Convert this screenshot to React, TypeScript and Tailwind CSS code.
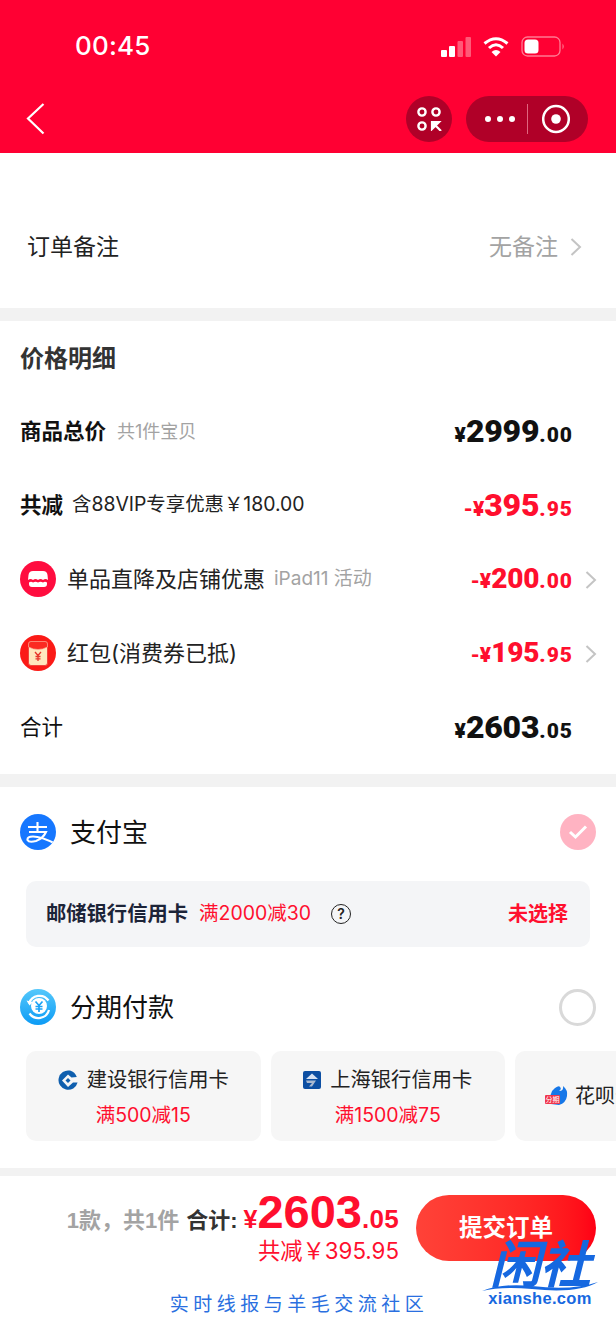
import React from "react";

const CJK = '"Inter","Noto Sans CJK SC",sans-serif';

function Chevron({ className = "" }: { className?: string }) {
  return (
    <svg width="12" height="20" viewBox="0 0 12 20" fill="none" className={className}>
      <path d="M1.500 2 L10 10 L1.500 18" stroke="#c4c4c4" strokeWidth="2" />
    </svg>
  );
}

function Price({ sign, main, dec, color, big = "text-[32px]" }: { sign: string; main: string; dec: string; color: string; big?: string }) {
  return (
    <div className={`flex items-baseline font-black font-['Roboto'] pb-[3px] ${color}`}>
      <span className="text-[21px] leading-none">{sign}</span>
      <span className={`${big} leading-none tracking-[-0.2px]`}>{main}</span>
      <span className="text-[21px] leading-none tracking-[1px]">{dec}</span>
    </div>
  );
}

function Row({ children, right }: { children: React.ReactNode; right: React.ReactNode }) {
  return (
    <div className="h-[74px] flex items-center justify-between pl-[20px] pr-[43px] relative">
      <div className="flex items-center min-w-0 pb-[2px]">{children}</div>
      {right}
    </div>
  );
}

function ShopIcon() {
  return (
    <div className="w-[36px] h-[36px] rounded-full bg-[#ff0d3f] flex items-center justify-center shrink-0 mr-[11px]">
      <svg width="22" height="18" viewBox="0 0 22 18">
        <path d="M6 1 H16 Q20 1 20.500 5 L21 10 Q18.500 8 16 10 Q13.500 8 11 10 Q8.500 8 6 10 Q3.500 8 1 10 L1.500 5 Q2 1 6 1 Z" fill="#fff" />
        <path d="M2 12.500 Q4 11 6 12.500 Q8.500 11 11 12.500 Q13.500 11 16 12.500 Q18 11 20 12.500 V14 Q20 17 17 17 H5 Q2 17 2 14 Z" fill="#fff" />
      </svg>
    </div>
  );
}

function RedPacketIcon() {
  return (
    <div className="w-[36px] h-[36px] rounded-full bg-[#fb1a16] flex items-center justify-center shrink-0 mr-[11px]">
      <svg width="20" height="25" viewBox="0 0 20 25">
        <rect x="0.500" y="0.500" width="19" height="24" rx="2.500" fill="#ffe6bd" stroke="#f0443c" />
        <path d="M0.500 3 Q0.500 .5 3 .5 H17 Q19.500 .5 19.500 3 V6 Q10 11 0.500 6 Z" fill="#fb2a22" stroke="#ffb9a0" strokeWidth="0.600" />
        <path d="M7 11 L10 14.500 L13 11 M10 14.500 V20 M7.500 15.500 H12.500 M7.500 17.800 H12.500" stroke="#e8332a" strokeWidth="1.300" fill="none" />
      </svg>
    </div>
  );
}

function AlipayIcon() {
  return (
    <svg width="36" height="36" viewBox="0 0 36 36" className="shrink-0">
      <defs>
        <clipPath id="ali"><circle cx="18" cy="18" r="18" /></clipPath>
      </defs>
      <circle cx="18" cy="18" r="18" fill="#1677ff" />
      <g clipPath="url(#ali)">
        <path d="M8 13 H27 M17.500 8 V18 M9 18 H26 Q23 24.500 16 27 Q9 29 7.500 26 Q7 22.500 13 22.500 Q21 22.500 36 30" stroke="#fff" strokeWidth="2.100" fill="none" />
      </g>
    </svg>
  );
}

function InstallmentIcon() {
  return (
    <svg width="36" height="36" viewBox="0 0 36 36" className="shrink-0">
      <defs>
        <linearGradient id="inst" x1="0" y1="0" x2="0" y2="1">
          <stop offset="0" stopColor="#55c8fb" />
          <stop offset="1" stopColor="#0c9bf5" />
        </linearGradient>
      </defs>
      <circle cx="18" cy="18" r="18" fill="url(#inst)" />
      <circle cx="19" cy="17" r="8" fill="#fff" />
      <path d="M9 14.500 A11 11 0 0 1 28.500 11.500 M29 21 A11 11 0 0 1 9.500 24.500" stroke="#fff" strokeWidth="2.200" fill="none" />
      <path d="M6.500 11.500 L9.500 16.500 L13 13 Z" fill="#fff" />
      <path d="M15.500 12.500 L19 16.500 L22.500 12.500 M19 16.500 V23 M15.500 17.500 H22.500 M15.500 20 H22.500" stroke="#1aa3f6" strokeWidth="1.700" fill="none" />
    </svg>
  );
}

function CcbIcon() {
  return (
    <svg width="20" height="20" viewBox="0 0 20 20" className="shrink-0">
      <path d="M12 .6 A9.700 9.700 0 1 0 19.600 12.500 L15 12.500 L10 17 L4 10.500 L10 4.500 L13.500 7.500 L18.800 7 Q17 2 12 .6 Z" fill="#0f5fae" />
      <path d="M7.500 10.500 L10 8 L12.500 10.500 L10 13 Z" fill="#0f5fae" />
    </svg>
  );
}

function ShIcon() {
  return (
    <svg width="18" height="18" viewBox="0 0 18 18" className="shrink-0">
      <rect width="18" height="18" rx="2" fill="#0d4fa3" />
      <path d="M9 2.500 L15 8 H3 Z" fill="#d6e2f4" />
      <path d="M3 9.500 H13 L9 15.500 H6 L9 12 H4 Z" fill="#aab9d0" />
    </svg>
  );
}

function HuabeiIcon() {
  return (
    <div className="relative w-[24px] h-[24px] shrink-0 mr-[6px]">
      <svg width="24" height="24" viewBox="0 0 24 24">
        <path d="M10 4 Q14 1 15 3 Q17 5 14 7 Q19 7 18 2 Q23 6 22 12 Q21 19 14 21 L6 20 Q3 14 6 10 Q7 6 10 4 Z" fill="#1677e8" />
      </svg>
      <span className="absolute left-0 top-[11px] w-[15px] h-[9px] bg-[#f0364c] rounded-[1px] text-white text-[7px] leading-[9px] text-center">分期</span>
    </div>
  );
}

function BankCard({ icon, name, promo }: { icon: React.ReactNode; name: string; promo: string }) {
  return (
    <div className="w-[234.500px] h-[90px] shrink-0 rounded-[10px] bg-[#f6f6f6] flex flex-col items-center pt-[15px]">
      <div className="flex items-center gap-[9px] h-[28px]">
        {icon}
        <span className="text-[20.300px] leading-[28px] text-[#222]">{name}</span>
      </div>
      <span className="text-[19.500px] leading-[26px] text-[#ff0f2e] mt-[8px]">{promo}</span>
    </div>
  );
}

export default function App() {
  return (
    <div className="w-[616px] h-[1334px] bg-white overflow-hidden relative flex flex-col" style={{ fontFamily: CJK }}>
      {/* Header */}
      <header className="h-[153px] bg-[#ff0033] shrink-0 flex flex-col">
        <div className="h-[92px] flex items-start justify-between pl-[75px] pr-[51px] pt-[31px]">
          <span className="text-[26px] leading-[30px] font-medium text-white tracking-[0.200px]">00:45</span>
          <div className="flex items-center gap-[12px] pt-[5px]">
            <svg width="30" height="20" viewBox="0 0 30 20">
              <rect x="0" y="13" width="6" height="7" rx="1" fill="#fff" />
              <rect x="8" y="9" width="6" height="11" rx="1" fill="#fff" />
              <rect x="16.500" y="4" width="5.500" height="16" rx="1" fill="#ff5a78" />
              <rect x="24.500" y="0" width="5.500" height="20" rx="1" fill="#ff5a78" />
            </svg>
            <svg width="26" height="20" viewBox="0 0 26 20" fill="none">
              <path d="M1.500 6.500 Q13 -3 24.500 6.500" stroke="#fff" strokeWidth="3" />
              <path d="M6 11 Q13 4.500 20 11" stroke="#fff" strokeWidth="3" />
              <path d="M13 19.500 L8.500 15 Q13 11 17.500 15 Z" fill="#fff" />
            </svg>
            <svg width="44" height="21" viewBox="0 0 44 21" fill="none">
              <rect x="1" y="1" width="38" height="19" rx="5.500" stroke="#ff7a93" strokeWidth="1.300" />
              <rect x="3.500" y="3.500" width="14" height="14" rx="3.500" fill="#fff" />
              <path d="M41.500 7.500 Q44 10.500 41.500 13.500 Z" fill="#ff7a93" />
            </svg>
          </div>
        </div>
        <div className="flex items-start justify-between pl-[26px] pr-[28px]">
          <svg width="20" height="32" viewBox="0 0 20 32" fill="none" className="mt-[11px]">
            <path d="M17.500 1 L2 15.500 L17.500 30.500" stroke="#fff" strokeWidth="2.200" />
          </svg>
          <div className="flex items-center gap-[14px] mt-[4px]">
            <div className="w-[46px] h-[46px] rounded-full bg-[#b00028] flex items-center justify-center">
              <svg width="25" height="24" viewBox="0 0 25 24" fill="none">
                <circle cx="5" cy="5" r="3.600" stroke="#fff" strokeWidth="2.400" />
                <circle cx="19" cy="5" r="3.600" stroke="#fff" strokeWidth="2.400" />
                <circle cx="5" cy="19" r="3.600" stroke="#fff" strokeWidth="2.400" />
                <path d="M15 15 H22 L15 22 Z M17 17 L24 24" stroke="#fff" strokeWidth="2.200" fill="#fff" />
              </svg>
            </div>
            <div className="w-[122px] h-[46px] rounded-full bg-[#b00028] flex items-center pl-[19px]">
              <svg width="30" height="8" viewBox="0 0 30 8" className="shrink-0">
                <circle cx="3" cy="4" r="3" fill="#fff" />
                <circle cx="15" cy="4" r="3" fill="#fff" />
                <circle cx="27" cy="4" r="3" fill="#fff" />
              </svg>
              <span className="block w-px h-[30px] bg-[#e0667f] ml-[12px]" />
              <svg width="28" height="30" viewBox="0 0 28 30" fill="none" className="ml-[14px]">
                <ellipse cx="14" cy="15" rx="12.800" ry="13" stroke="#fff" strokeWidth="2.500" />
                <circle cx="14" cy="15" r="4.800" fill="#fff" />
              </svg>
            </div>
          </div>
        </div>
      </header>

      {/* Note */}
      <section className="h-[155px] shrink-0 flex items-center justify-between pl-[27px] pr-[34px] pt-[33px]">
        <span className="text-[23px] text-[#222]">订单备注</span>
        <div className="flex items-center gap-[12px]">
          <span className="text-[23px] text-[#a3a3a3]">无备注</span>
          <Chevron />
        </div>
      </section>
      <div className="h-[13px] bg-[#f2f2f2] shrink-0" />

      {/* Details */}
      <section className="h-[453px] shrink-0 flex flex-col">
        <div className="h-[74px] flex items-center pl-[20px] pt-[1px]">
          <span className="text-[24px] font-bold text-[#333]">价格明细</span>
        </div>
        <Row right={<Price sign="¥" main="2999" dec=".00" color="text-[#111]" />}>
          <span className="text-[21.500px] font-bold text-[#111]">商品总价</span>
          <span className="text-[18px] text-[#a3a3a3] ml-[11px]">共1件宝贝</span>
        </Row>
        <Row right={<Price sign="-¥" main="395" dec=".95" color="text-[#ff0f2e]" />}>
          <span className="text-[21.500px] font-bold text-[#111]">共减</span>
          <span className="text-[19.400px] text-[#222] ml-[9px]">含88VIP专享优惠￥180.00</span>
        </Row>
        <Row
          right={
            <>
              <Price sign="-¥" main="200" dec=".00" color="text-[#ff0f2e]" big="text-[28px]" />
              <Chevron className="absolute right-[19px] top-[27px]" />
            </>
          }
        >
          <ShopIcon />
          <span className="text-[22px] text-[#222]">单品直降及店铺优惠</span>
          <span className="text-[19px] text-[#a3a3a3] ml-[9px]">iPad11 活动</span>
        </Row>
        <Row
          right={
            <>
              <Price sign="-¥" main="195" dec=".95" color="text-[#ff0f2e]" big="text-[28px]" />
              <Chevron className="absolute right-[19px] top-[27px]" />
            </>
          }
        >
          <RedPacketIcon />
          <span className="text-[22px] text-[#222]">红包(消费券已抵)</span>
        </Row>
        <Row right={<Price sign="¥" main="2603" dec=".05" color="text-[#111]" />}>
          <span className="text-[21.500px] text-[#111]">合计</span>
        </Row>
      </section>
      <div className="h-[13px] bg-[#f2f2f2] shrink-0" />

      {/* Payment */}
      <section className="h-[381px] shrink-0 flex flex-col overflow-hidden">
        <div className="h-[90px] shrink-0 flex items-center justify-between px-[20px]">
          <div className="flex items-center gap-[14px]">
            <AlipayIcon />
            <span className="text-[26px] text-[#111]">支付宝</span>
          </div>
          <div className="w-[36px] h-[36px] rounded-full bg-[#ffb3c2] flex items-center justify-center">
            <svg width="20" height="16" viewBox="0 0 20 16" fill="none">
              <path d="M2 8 L7.500 13 L18 2.500" stroke="#fff" strokeWidth="3" />
            </svg>
          </div>
        </div>
        <div className="mx-[26px] h-[66px] shrink-0 rounded-[10px] bg-[#f4f5f7] mt-[4px] flex items-center justify-between pl-[20px] pr-[22px]">
          <div className="flex items-center">
            <span className="text-[20.300px] font-bold text-[#1c2438]">邮储银行信用卡</span>
            <span className="text-[19.500px] text-[#ff0f2e] ml-[11px]">满2000减30</span>
            <span className="w-[20px] h-[20px] ml-[20px] rounded-full border-[1.500px] border-[#222] text-[#222] text-[14px] leading-[17px] text-center font-semibold">?</span>
          </div>
          <span className="text-[20px] font-bold text-[#ff0f2e]">未选择</span>
        </div>
        <div className="h-[88px] shrink-0 flex items-center justify-between px-[20px] mt-[16px]">
          <div className="flex items-center gap-[14px]">
            <InstallmentIcon />
            <span className="text-[26px] text-[#111]">分期付款</span>
          </div>
          <div className="w-[37px] h-[37px] rounded-full border-[3px] border-[#d9d9d9]" />
        </div>
        <div className="flex gap-[10px] pl-[26px]">
          <BankCard icon={<CcbIcon />} name="建设银行信用卡" promo="满500减15" />
          <BankCard icon={<ShIcon />} name="上海银行信用卡" promo="满1500减75" />
          <div className="w-[234.500px] h-[90px] shrink-0 rounded-[10px] bg-[#f6f6f6] flex items-center pl-[30px]">
            <HuabeiIcon />
            <span className="text-[20px] text-[#222]">花呗分期</span>
          </div>
        </div>
      </section>
      <div className="h-[8px] bg-[#f2f2f2] shrink-0" />

      {/* Bottom */}
      <footer className="flex-1 flex flex-col relative">
        <div className="flex items-start justify-between px-[20px] pt-[19px]">
          <div className="flex-1 flex flex-col items-end pr-[17px]">
            <div className="flex items-baseline h-[42px] font-['Liberation_Sans','Noto_Sans_CJK_SC',sans-serif] font-bold">
              <span className="text-[22px] leading-[34px] text-[#a3a3a3]">1款，共1件</span>
              <span className="text-[22px] leading-[34px] text-[#333] ml-[7px]">合计:</span>
              <span className="text-[25px] leading-[34px] text-[#ff0f2e] ml-[6px]">¥</span>
              <span className="text-[47px] leading-[34px] text-[#ff0f2e]">2603</span>
              <span className="text-[26px] leading-[34px] text-[#ff0f2e] tracking-[0.300px]">.05</span>
            </div>
            <span className="text-[22.300px] leading-[28px] text-[#ff0f2e]">共减￥395.95</span>
          </div>
          <div className="w-[180px] h-[66px] rounded-full flex items-center justify-center bg-gradient-to-r from-[#ff4238] to-[#ff0015] text-white text-[23.500px] font-bold">
            提交订单
          </div>
        </div>
        <div className="text-center text-[19px] leading-[26px] tracking-[4.500px] text-[#2a6fe0] pr-[18px] mt-[27px]">实时线报与羊毛交流社区</div>

        {/* Watermark */}
        <div className="absolute left-[480px] top-[62px] w-[120px] flex flex-col items-center">
          <span className="text-[51px] leading-[47px] font-bold italic text-[#1668e0] font-['Noto_Sans_CJK_SC'] tracking-[-1px] whitespace-nowrap">闲社</span>
          <svg width="116" height="10" viewBox="0 0 116 10" className="-mt-[3px]">
            <path d="M0 9 Q20 1 50 4 Q90 9 116 0 Q95 12 50 7 Q20 4 0 9 Z" fill="#1668e0" />
          </svg>
          <span className="text-[16.500px] leading-[15px] font-bold text-[#1668e0] font-['Liberation_Sans'] tracking-[0.300px] -mt-[1px] whitespace-nowrap">xianshe.com</span>
        </div>
      </footer>
    </div>
  );
}
